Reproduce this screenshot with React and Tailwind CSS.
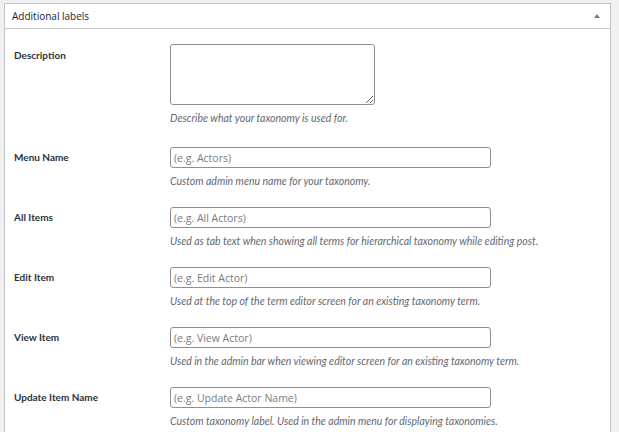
const rows = [
  { label: 'Menu Name', placeholder: '(e.g. Actors)', help: 'Custom admin menu name for your taxonomy.' },
  { label: 'All Items', placeholder: '(e.g. All Actors)', help: 'Used as tab text when showing all terms for hierarchical taxonomy while editing post.' },
  { label: 'Edit Item', placeholder: '(e.g. Edit Actor)', help: 'Used at the top of the term editor screen for an existing taxonomy term.' },
  { label: 'View Item', placeholder: '(e.g. View Actor)', help: 'Used in the admin bar when viewing editor screen for an existing taxonomy term.' },
  { label: 'Update Item Name', placeholder: '(e.g. Update Actor Name)', help: 'Custom taxonomy label. Used in the admin menu for displaying taxonomies.' },
]

const labelCls = "w-[156px] shrink-0 font-['Lato',sans-serif] text-[10px] font-bold leading-[16px] text-[#2c3338]"
const helpCls = "mt-[6px] font-['Lato',sans-serif] text-[10.5px] italic leading-[14px] text-[#646970]"

export default function App() {
  return (
    <div className="h-[432px] w-[619px] overflow-hidden bg-[#f0f0f1] pl-[4px] pt-[3px]">
      <div className="h-[440px] w-[607px] border border-[#c3c4c7] bg-white">
        <div className="flex h-[25px] items-center justify-between border-b border-[#c3c4c7] pl-[7px] pr-[10px]">
          <h2 className="font-['Open_Sans',sans-serif] text-[10px] text-[#1d2327]">Additional labels</h2>
          <svg width="6" height="4" viewBox="0 0 6 4" aria-hidden="true">
            <path d="M3 0 L6 4 L0 4 Z" fill="#787c82" />
          </svg>
        </div>

        <div className="flex pb-[7px] pl-[9px] pt-[15px]">
          <div className={`${labelCls} mt-[3px]`}>Description</div>
          <div>
            <textarea className="block h-[61px] w-[205px] rounded-[3px] border border-[#8c8f94] bg-white" />
            <p className={helpCls}>Describe what your taxonomy is used for.</p>
          </div>
        </div>

        {rows.map((r) => (
          <div key={r.label} className="flex pb-[4px] pl-[9px] pt-[15px]">
            <div className={`${labelCls} mt-[2px]`}>{r.label}</div>
            <div>
              <input
                type="text"
                placeholder={r.placeholder}
                className="block h-[21px] w-[321px] rounded-[3px] border border-[#8c8f94] bg-white pl-[3px] font-['Open_Sans',sans-serif] text-[10.5px] text-[#1d2327] placeholder:text-[#787c82]"
              />
              <p className={helpCls}>{r.help}</p>
            </div>
          </div>
        ))}
      </div>
    </div>
  )
}
